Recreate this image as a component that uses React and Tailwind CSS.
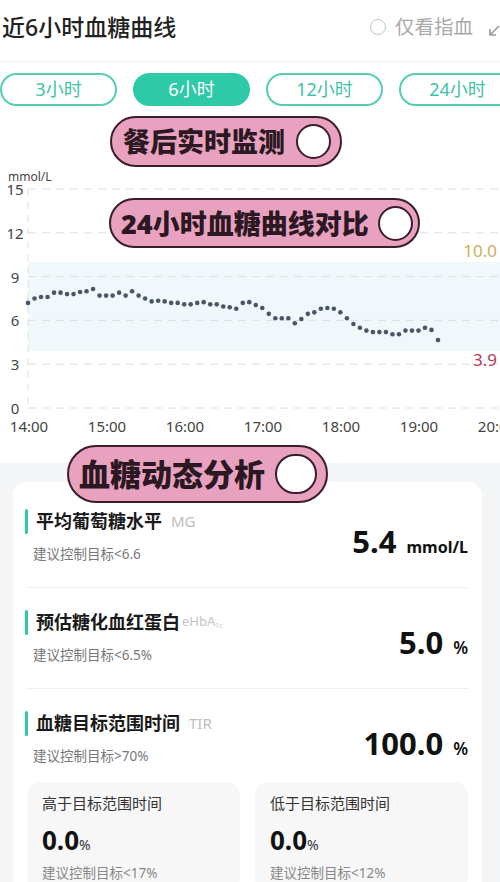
import React from "react";

const CJK = { fontFamily: '"Noto Sans", "Noto Sans CJK SC", sans-serif' };

const glucose = [
  7.2, 7.5, 7.6, 7.6, 7.9, 7.9, 7.8, 7.8, 7.95, 8.0,
  8.15, 7.7, 7.7, 7.7, 7.9, 7.7, 8.0, 7.7, 7.5, 7.3,
  7.35, 7.3, 7.2, 7.2, 7.1, 7.1, 7.2, 7.25, 7.1, 7.1,
  6.95, 6.9, 6.8, 7.2, 7.25, 7.05, 6.85, 6.45, 6.15, 6.15,
  6.15, 5.8, 6.1, 6.45, 6.55, 6.8, 6.85, 6.8, 6.55, 6.15,
  5.75, 5.5, 5.3, 5.2, 5.2, 5.2, 5.05, 5.05, 5.3, 5.3,
  5.3, 5.5, 5.35, 4.65,
];

// chart svg starts at page y=167
const yOf = (v) => 408 - v * 14.6 - 167;

const PinkTag = ({ text, className, textClass, circleClass }) => (
  <div
    className={`flex items-center rounded-full border-2 border-[#3b1d2b] bg-[#e8a2bf] ${className}`}
  >
    <span className={`font-black text-[#2b1822] leading-none ${textClass}`}>{text}</span>
    <span className={`rounded-full border-2 border-[#3b1d2b] bg-white ${circleClass}`} />
  </div>
);

const Chart = () => {
  const ticks = [15, 12, 9, 6, 3, 0];
  const hours = ["14:00", "15:00", "16:00", "17:00", "18:00", "19:00", "20:00"];
  return (
    <svg width="500" height="296" className="block">
      <rect x="28" y={yOf(10)} width="472" height={yOf(3.9) - yOf(10)} fill="#f1f8fb" />
      <line x1="28" y1={yOf(15)} x2="28" y2={yOf(0)} stroke="#dedede" strokeDasharray="7 6" />
      {ticks.map((t) => (
        <g key={t}>
          <line x1="28" y1={yOf(t)} x2="500" y2={yOf(t)} stroke="#dedede" strokeDasharray="8 6" />
          <text x="15" y={yOf(t)} textAnchor="middle" dominantBaseline="central" fontSize="15" fill="#444" fontFamily="Noto Sans, sans-serif">
            {t}
          </text>
        </g>
      ))}
      <text x="8" y="9" dominantBaseline="central" fontSize="12" fill="#444" fontFamily="Noto Sans, sans-serif">mmol/L</text>
      <text x="497" y="83" textAnchor="end" dominantBaseline="central" fontSize="17" fill="#d1ad5c" fontFamily="Noto Sans, sans-serif">10.0</text>
      <text x="497" y="192" textAnchor="end" dominantBaseline="central" fontSize="17" fill="#b33a5c" fontFamily="Noto Sans, sans-serif">3.9</text>
      {hours.map((h, i) => (
        <text key={h} x={29 + i * 78} y="259" textAnchor="middle" dominantBaseline="central" fontSize="15" fill="#444" fontFamily="Noto Sans, sans-serif">
          {h}
        </text>
      ))}
      {glucose.map((v, i) => (
        <circle key={i} cx={28 + (i * 410) / 63} cy={yOf(v)} r="2.3" fill="#4b5565" />
      ))}
    </svg>
  );
};

const MetricRow = ({ title, tag, sub, value, unit, unitClass, last }) => (
  <div className={`flex justify-between items-start pt-[22px] ${last ? "h-[93px]" : "h-[101px] border-b border-[#efefef]"}`}>
    <div className="flex flex-col">
      <div className="flex items-center h-[24px]">
        <span className="w-[3px] h-[25px] rounded-full bg-[#2ccaa8] -ml-[1px] mr-[8px]" />
        <span className="text-[18px] font-bold text-[#1a1a1a] leading-none">{title}</span>
        {tag}
      </div>
      <div className="mt-[11px] h-[20px] flex items-center text-[13.5px] text-[#777] pl-[7px]">{sub}</div>
    </div>
    <div className="mt-[14px] h-[36px] flex items-baseline">
      <span className="text-[31px] font-bold text-[#111] leading-[36px]">{value}</span>
      <span className={`ml-[10px] font-bold text-[#111] ${unitClass}`}>{unit}</span>
    </div>
  </div>
);

const SubCard = ({ title, sub }) => (
  <div className="rounded-[14px] bg-[#f7f7f8] pt-[10px] px-[15px] h-[110px]">
    <div className="text-[15px] leading-[22px] text-[#333]">{title}</div>
    <div className="mt-[11px] h-[30px] flex items-baseline">
      <span className="text-[26px] font-bold text-[#111] leading-[30px]">0.0</span>
      <span className="text-[14px] text-[#333]">%</span>
    </div>
    <div className="mt-[9px] text-[13.5px] leading-[18px] text-[#888]">{sub}</div>
  </div>
);

export default function App() {
  return (
    <div className="w-[500px] h-[882px] overflow-hidden bg-white relative" style={CJK}>
      {/* header */}
      <div className="h-[54px] flex items-center justify-between pl-[2px]">
        <span className="text-[23px] font-medium text-[#222]">近6小时血糖曲线</span>
        <div className="flex items-center">
          <span className="w-[16px] h-[16px] rounded-full border-[1.5px] border-[#c4c4c4]" />
          <span className="ml-[9px] text-[19.5px] text-[#a9a9a9]">仅看指血</span>
          <svg width="12" height="12" viewBox="0 0 12 12" className="ml-[15px] mt-[8px]">
            <path d="M11 1 L2 10 M2 4 L2 10 L8 10" stroke="#9a9a9a" strokeWidth="1.6" fill="none" />
          </svg>
        </div>
      </div>
      <div className="mt-[7px] h-[1px] bg-[#f0f0f0]" />

      {/* tabs */}
      <div className="mt-[11px] flex gap-[16px] overflow-hidden">
        {["3小时", "6小时", "12小时", "24小时"].map((t) => (
          <div
            key={t}
            className={`shrink-0 w-[117px] h-[33px] rounded-full border-2 flex items-center justify-center text-[18px] ${
              t === "6小时" ? "bg-[#2ecaa8] border-[#2ecaa8] text-white" : "border-[#55cdb5] text-[#3fc3a7]"
            }`}
          >
            {t}
          </div>
        ))}
      </div>

      <PinkTag
        text="餐后实时监测"
        className="mt-[10px] ml-[110px] w-[232px] h-[51px] pl-[11px]"
        textClass="text-[27px]"
        circleClass="ml-[11px] w-[35px] h-[35px]"
      />

      {/* chart */}
      <div className="relative">
        <Chart />
        <PinkTag
          text="24小时血糖曲线对比"
          className="absolute top-[31px] left-[109px] w-[311px] h-[50px] pl-[10px]"
          textClass="text-[27px]"
          circleClass="ml-[9px] w-[35px] h-[35px]"
        />
      </div>

      {/* analysis */}
      <div className="relative bg-[#f4f5f7] pt-[19px] pl-[13px] pr-[18px] h-[419px]">
        <PinkTag
          text="血糖动态分析"
          className="absolute -top-[18px] left-[67px] w-[261px] h-[58px] pl-[10px] z-10"
          textClass="text-[31px]"
          circleClass="ml-[10px] w-[42px] h-[40px]"
        />
        <div className="bg-white rounded-[14px] pt-[5px] pl-[13px] pr-[14px] h-[420px]">
          <MetricRow
            title="平均葡萄糖水平"
            tag={<span className="ml-[9px] text-[15px] text-[#bdbdbd]">MG</span>}
            sub="建议控制目标<6.6"
            value="5.4"
            unit="mmol/L"
            unitClass="text-[16px]"
          />
          <MetricRow
            title="预估糖化血红蛋白"
            tag={
              <span className="ml-[2px] text-[13px] text-[#c4c4c4]">
                eHbA<sub className="text-[7px]">1c</sub>
              </span>
            }
            sub="建议控制目标<6.5%"
            value="5.0"
            unit="%"
            unitClass="text-[17px] font-semibold"
          />
          <MetricRow
            title="血糖目标范围时间"
            tag={<span className="ml-[9px] text-[15px] text-[#bdbdbd]">TIR</span>}
            sub="建议控制目标>70%"
            value="100.0"
            unit="%"
            unitClass="text-[17px] font-semibold"
            last
          />
          <div className="grid grid-cols-2 gap-[15px] pl-[1px]">
            <SubCard title="高于目标范围时间" sub="建议控制目标<17%" />
            <SubCard title="低于目标范围时间" sub="建议控制目标<12%" />
          </div>
        </div>
      </div>
    </div>
  );
}
